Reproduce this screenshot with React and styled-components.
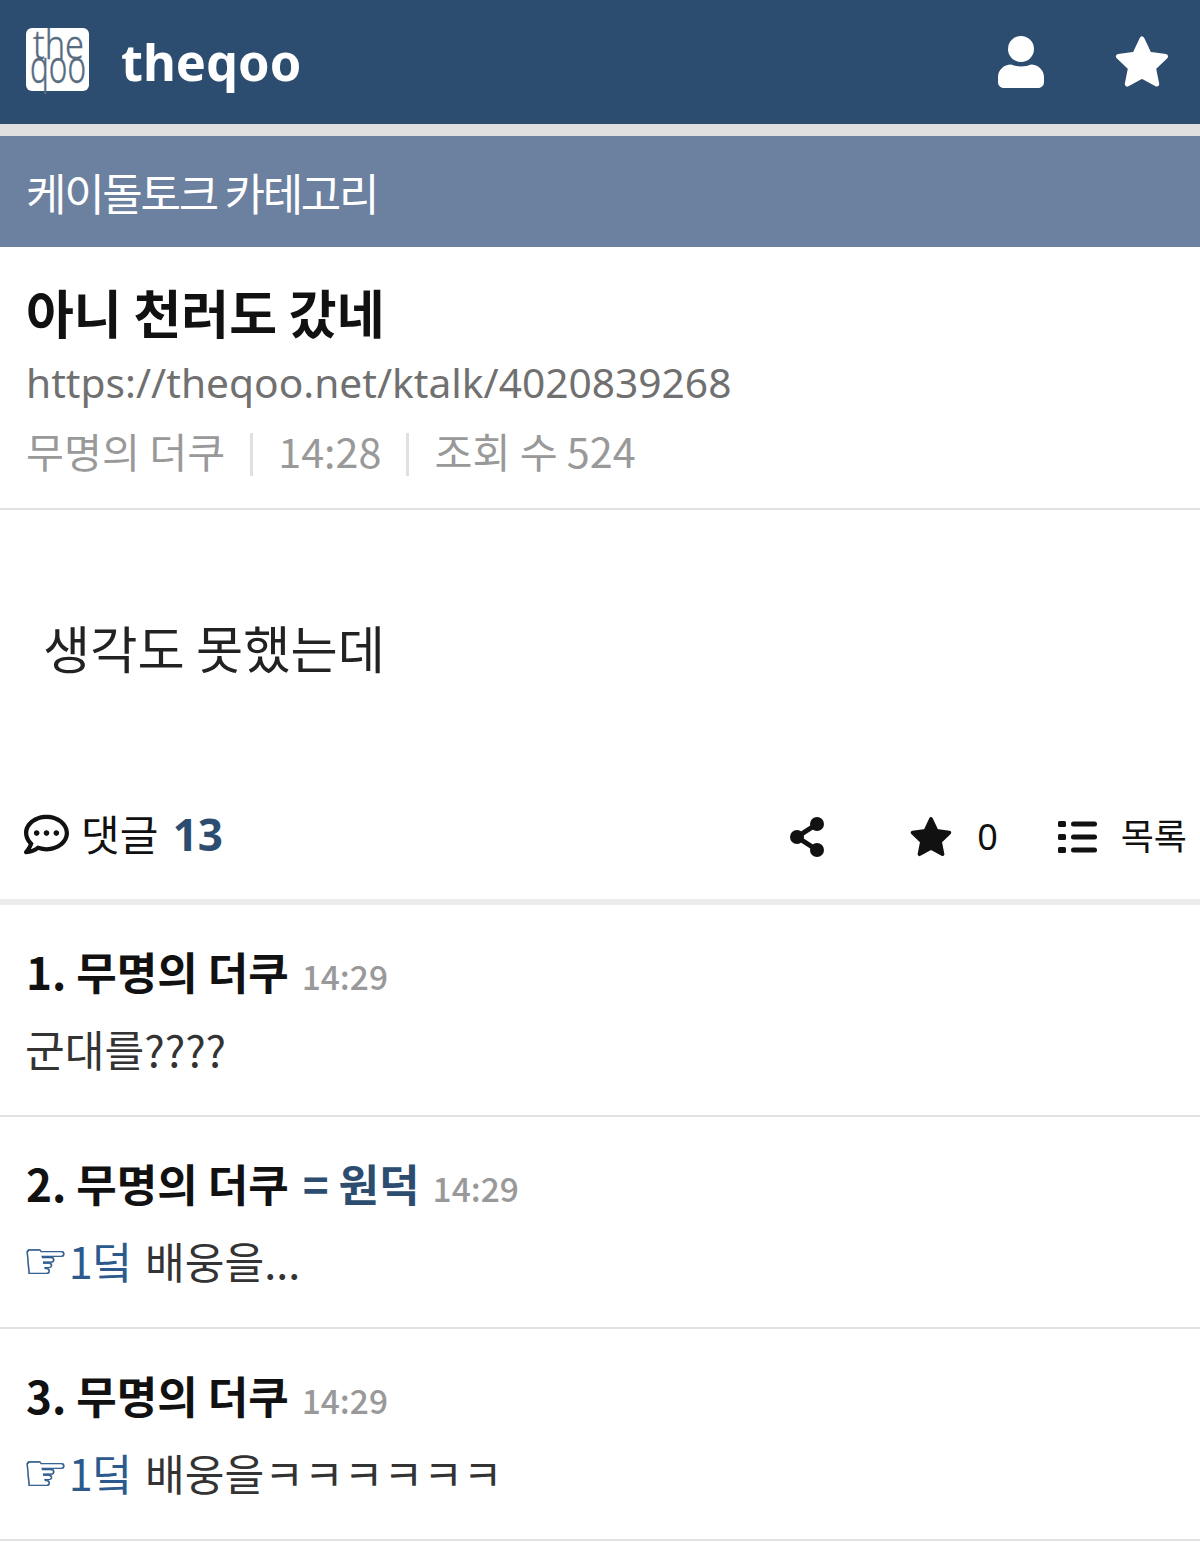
import React from 'react';
import styled, { createGlobalStyle } from 'styled-components';
import { FaRegCommentDots } from 'react-icons/fa';

const GlobalStyle = createGlobalStyle`
  html, body {
    margin: 0;
    padding: 0;
    background: #fff;
  }
  body {
    font-family: "Noto Sans CJK KR", "Noto Sans", sans-serif;
    color: #111;
  }
`;

const Page = styled.div`
  width: 1200px;
  height: 1543px;
  overflow: hidden;
  background: #fff;
`;

const Header = styled.header`
  height: 124px;
  background: #2c4d70;
  border-bottom: 12px solid #e0e0e0;
  display: flex;
  align-items: center;
  padding: 0 31px 0 26px;
`;

const LogoMark = styled.svg`
  display: block;
  width: 63px;
  height: 63px;
  flex: none;
  margin-bottom: 6px;
  overflow: visible;
  text {
    font-family: "Noto Sans", sans-serif;
    font-weight: 300;
    fill: #566b80;
    stroke: #566b80;
    stroke-width: 0.3px;
  }
`;

const Brand = styled.div`
  margin-left: 32px;
  flex: 1;
  font-family: "Noto Sans", sans-serif;
  font-weight: 700;
  font-size: 50.6px;
  line-height: 58px;
  color: #fff;
`;

const HeaderIcons = styled.div`
  display: flex;
  align-items: center;
  gap: 71px;
  svg { display: block; }
`;

const Category = styled.div`
  height: 111px;
  background: #6c819f;
  color: #fff;
  display: flex;
  align-items: center;
  padding-left: 26px;
  font-size: 44px;
  letter-spacing: -2.3px;
`;

const PostHead = styled.section`
  height: 229px;
  border-bottom: 2px solid #e2e2e2;
  padding: 32px 28px 0 26px;
`;

const Title = styled.h1`
  margin: 0;
  font-size: 52px;
  line-height: 66px;
  font-weight: 700;
  color: #111;
`;

const Url = styled.div`
  margin-top: 5px;
  font-family: "Noto Sans", sans-serif;
  font-size: 40.7px;
  line-height: 64px;
  color: #707070;
`;

const Meta = styled.div`
  margin-top: 4px;
  display: flex;
  align-items: center;
  font-size: 41.3px;
  line-height: 64px;
  color: #999;
`;

const Divider = styled.span`
  width: 3px;
  height: 43px;
  margin: 8px 25px 0;
  background: #e0e0e0;
`;

const Body = styled.div`
  height: 179px;
  padding: 104px 0 0 43px;
  font-size: 51.3px;
  line-height: 66px;
  color: #222;
`;

const Actions = styled.div`
  height: 80px;
  padding: 0 13px 26px 24px;
  display: flex;
  align-items: center;
  font-size: 42px;
  border-bottom: 6px solid #ececec;
`;

const ReplyLabel = styled.div`
  flex: 1;
  display: flex;
  align-items: center;
  gap: 12px;
  svg {
    font-size: 45px;
    margin-top: 2px;
  }
`;

const Count = styled.b`
  margin-left: 5px;
  color: #2c4d70;
  font-family: "Noto Sans", sans-serif;
  font-size: 44px;
  font-weight: 700;
`;

const ActionItem = styled.div`
  display: flex;
  align-items: center;
  margin-left: ${p => p.$gap}px;
  margin-top: 7px;
  gap: ${p => p.$inner || 0}px;
  font-size: 36px;
  svg { display: block; }
`;

const Zero = styled.span`
  font-family: "Noto Sans", sans-serif;
`;

const ListLabel = styled.span`
  margin-top: -5px;
`;

const Comment = styled.article`
  height: 210px;
  border-bottom: 2px solid #e2e2e2;
  padding-left: 26px;
`;

const CommentHead = styled.div`
  padding-top: 36px;
  display: flex;
  align-items: baseline;
  font-size: 44px;
  line-height: 60px;
  font-weight: 700;
  color: #111;
`;

const Tag = styled.span`
  color: #2c4d70;
  margin-left: 14px;
`;

const Time = styled.span`
  margin-left: 13px;
  font-size: 33.5px;
  font-weight: 500;
  color: #999;
`;

const CommentText = styled.div`
  margin-top: 12px;
  margin-left: -1px;
  font-size: 43.2px;
  line-height: 60px;
  color: #333;
  white-space: pre;
`;

const Reply = styled.span`
  margin-right: 3px;
  color: #2c5a8c;
`;

const Hand = styled.span`
  margin-left: -3px;
  font-family: "DejaVu Sans", sans-serif;
  font-size: 52px;
  line-height: 0;
  -webkit-text-stroke: 0.5px #2c5a8c;
`;

const comments = [
  { id: 1, time: '14:29', text: '군대를????' },
  { id: 2, tag: '= 원덕', time: '14:29', reply: '1덬', text: ' 배웅을...' },
  { id: 3, time: '14:29', reply: '1덬', text: ' 배웅을ㅋㅋㅋㅋㅋㅋ' },
];

const STAR = 'M12 2.6 L14.9 8.8 L21.6 9.7 L16.7 14.4 L18 21 L12 17.7 L6 21 L7.3 14.4 L2.4 9.7 L9.1 8.8 Z';

function Star({ size, color }) {
  return (
    <svg width={size} height={size} viewBox="1 1 22 22" fill={color} stroke={color} strokeWidth="2" strokeLinejoin="round">
      <path d={STAR} />
    </svg>
  );
}

function UserIcon() {
  return (
    <svg width="46" height="52" viewBox="0 0 46 52" fill="#fff">
      <circle cx="23" cy="13" r="13" />
      <path d="M13 28.5 C18 31 28 31 33 28.5 C40 28.5 46 34 46 41 V46 C46 49.5 43.5 52 40 52 H6 C2.5 52 0 49.5 0 46 V41 C0 34 6 28.5 13 28.5 Z" />
    </svg>
  );
}

function ShareIcon() {
  return (
    <svg width="36" height="40" viewBox="0 0 36 40" fill="#111">
      <path d="M28 7 L8 20 L28 33" fill="none" stroke="#111" strokeWidth="5" />
      <circle cx="28" cy="7" r="7" />
      <circle cx="8" cy="20" r="7" />
      <circle cx="28" cy="33" r="7" />
    </svg>
  );
}

function ListIcon() {
  return (
    <svg width="39" height="32" viewBox="0 0 39 32" fill="#111">
      <rect x="0" y="0" width="8" height="6" rx="1.5" />
      <rect x="0" y="13" width="8" height="6" rx="1.5" />
      <rect x="0" y="26" width="8" height="6" rx="1.5" />
      <rect x="13" y="0.5" width="26" height="5" rx="2.5" />
      <rect x="13" y="13.5" width="26" height="5" rx="2.5" />
      <rect x="13" y="26.5" width="26" height="5" rx="2.5" />
    </svg>
  );
}

function Logo() {
  return (
    <LogoMark viewBox="0 0 63 63">
      <rect width="63" height="63" rx="6" fill="#fff" />
      <text transform="translate(7 31) scale(1 1.2)" fontSize="33" textLength="51" lengthAdjust="spacingAndGlyphs">the</text>
      <text transform="translate(4 55) scale(1 1.5)" fontSize="30" textLength="56" lengthAdjust="spacingAndGlyphs">qoo</text>
    </LogoMark>
  );
}

export default function App() {
  return (
    <Page>
      <GlobalStyle />
      <Header>
        <Logo />
        <Brand>theqoo</Brand>
        <HeaderIcons>
          <UserIcon />
          <Star size={54} color="#fff" />
        </HeaderIcons>
      </Header>
      <Category>케이돌토크 카테고리</Category>
      <PostHead>
        <Title>아니 천러도 갔네</Title>
        <Url>https://theqoo.net/ktalk/4020839268</Url>
        <Meta>
          무명의 더쿠
          <Divider />
          14:28
          <Divider />
          조회 수 524
        </Meta>
      </PostHead>
      <Body>생각도 못했는데</Body>
      <Actions>
        <ReplyLabel>
          <FaRegCommentDots />
          <span>댓글 <Count>13</Count></span>
        </ReplyLabel>
        <ActionItem $gap={0}><ShareIcon /></ActionItem>
        <ActionItem $gap={85} $inner={25}><Star size={42} color="#111" /><Zero>0</Zero></ActionItem>
        <ActionItem $gap={60} $inner={24}><ListIcon /><ListLabel>목록</ListLabel></ActionItem>
      </Actions>
      {comments.map(c => (
        <Comment key={c.id}>
          <CommentHead>
            <span>{c.id}. 무명의 더쿠</span>
            {c.tag && <Tag>{c.tag}</Tag>}
            <Time>{c.time}</Time>
          </CommentHead>
          <CommentText>
            {c.reply && <Reply><Hand>☞</Hand>{c.reply}</Reply>}
            {c.text}
          </CommentText>
        </Comment>
      ))}
    </Page>
  );
}
